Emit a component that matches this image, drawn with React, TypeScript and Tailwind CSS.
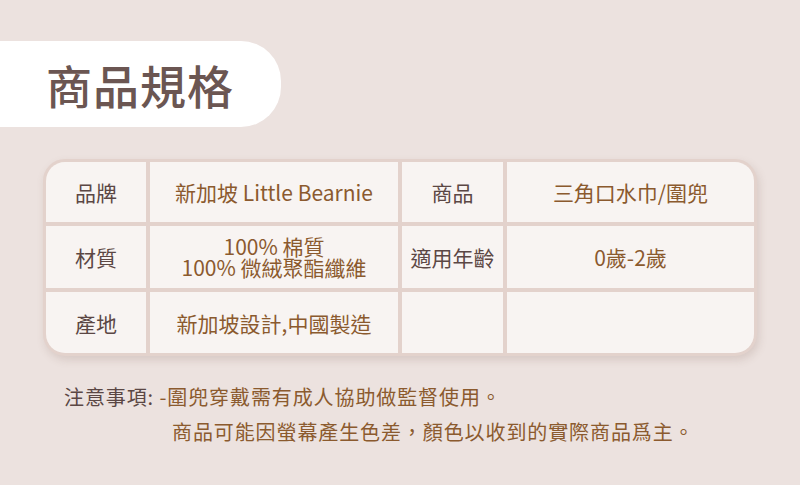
const font = "font-['Noto_Sans_CJK_TC','Noto_Sans',sans-serif]"

function Cell({ children, label = false, className = "" }: { children?: React.ReactNode; label?: boolean; className?: string }) {
  return (
    <div
      className={`flex items-center justify-center bg-[#f8f4f2] text-center text-[21px] leading-[22px] ${
        label ? "text-[#5b4744]" : "text-[#8b5a2e]"
      } ${className}`}
    >
      {children}
    </div>
  )
}

export default function App() {
  return (
    <div className={`h-[485px] w-[800px] overflow-hidden bg-[#ece2df] ${font}`}>
      <div className="pt-[41px]">
        <div className="flex h-[86px] w-[281px] items-center rounded-r-[40px] bg-white pl-[46px]">
          <h1 className="text-[46px] leading-none font-medium tracking-[1px] text-[#6b5652]">商品規格</h1>
        </div>
      </div>

      <div className="ml-[43px] mt-[32px] w-[714px] rounded-[22px] border-[3px] border-[#e3d2cc] bg-[#e3d2cc] shadow-[2px_4px_8px_rgba(120,90,80,0.18)]">
        <div className="grid grid-cols-[100px_248px_101px_247px] grid-rows-[60px_62px_61px] gap-[4px] overflow-hidden rounded-[19px]">
          <Cell label>品牌</Cell>
          <Cell>新加坡 Little Bearnie</Cell>
          <Cell label>商品</Cell>
          <Cell>三角口水巾/圍兜</Cell>

          <Cell label>材質</Cell>
          <Cell className="flex-col">
            <span className="block h-[21px] leading-[21px]">100% 棉質</span>
            <span className="block h-[21px] leading-[21px]">100% 微絨聚酯纖維</span>
          </Cell>
          <Cell label>適用年齡</Cell>
          <Cell>0歲-2歲</Cell>

          <Cell label>產地</Cell>
          <Cell>新加坡設計,中國製造</Cell>
          <Cell />
          <Cell />
        </div>
      </div>

      <div className="mt-[30px] pl-[64px] text-[20px] leading-[22px] tracking-[0.9px]">
        <p>
          <span className="text-[#5b4744]">注意事項:</span>
          <span className="text-[#8b5a2e]"> -圍兜穿戴需有成人協助做監督使用。</span>
        </p>
        <p className="mt-[13px] pl-[108px] text-[#8b5a2e]">商品可能因螢幕產生色差，顏色以收到的實際商品爲主。</p>
      </div>
    </div>
  )
}
